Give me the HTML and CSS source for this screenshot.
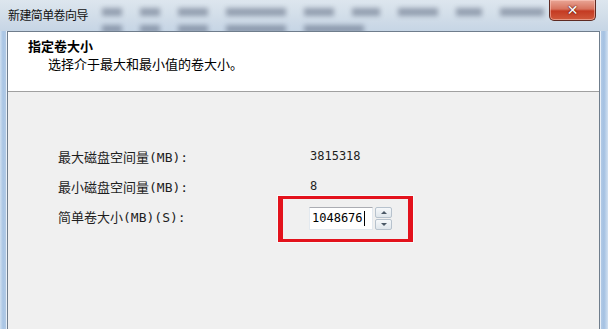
FILE: index.html
```html
<!DOCTYPE html>
<html lang="zh-CN">
<head>
    <meta charset="UTF-8">
    <meta name="viewport" content="width=device-width, initial-scale=1.0">
    <title>新建简单卷向导</title>
    <link rel="stylesheet" href="styles.css">
</head>
<body>
    <div class="window">
        <div class="titlebar">
            <span class="title">新建简单卷向导</span>
            <!-- blurred window behind the glass -->
            <div class="ghost">
                <div class="ghost-row">
                    <i class="w20"></i><i class="w20"></i><i class="w30"></i>
                    <i class="w60"></i><i class="w30"></i><i class="w28"></i><i class="w40"></i><i class="w26"></i><i class="w44"></i>
                </div>
                <div class="ghost-row">
                    <i class="w20"></i><i class="w20"></i><i class="w30"></i>
                    <i class="w60"></i><i class="w60"></i>
                </div>
            </div>
            <button class="close">✕</button>
        </div>
        <div class="client">
            <div class="header">
                <div class="h-title">指定卷大小</div>
                <div class="h-sub">选择介于最大和最小值的卷大小。</div>
            </div>
            <div class="content">
                <div class="form">
                    <div class="label">最大磁盘空间量(MB):</div>
                    <div class="value">3815318</div>
                    <div class="label">最小磁盘空间量(MB):</div>
                    <div class="value">8</div>
                    <div class="label">简单卷大小(MB)(S):</div>
                    <div class="spin">
                        <div class="spin-input">1048676<span class="caret"></span></div>
                        <div class="spin-btns">
                            <div class="spin-btn"><span class="tri up"></span></div>
                            <div class="spin-btn"><span class="tri down"></span></div>
                        </div>
                    </div>
                    <div class="mark"></div>
                </div>
            </div>
        </div>
    </div>
</body>
</html>
```

FILE: styles.css
```css
/* Page */
body {
    margin: 0;
    padding: 0;
    width: 608px;
    height: 329px;
    overflow: hidden;
    font-family: "DejaVu Sans Mono", "Noto Sans CJK SC", monospace;
    font-size: 13px;
    color: #000;
}

/* Window frame */
.window {
    height: 329px;
    display: flex;
    flex-direction: column;
    padding: 0 8px 0 7px;
    background: linear-gradient(to right, #cfdff0 0, #a9c5e4 3px, #b6cde7 7px, #b6cde7 calc(100% - 8px), #a4c1e2 calc(100% - 4px), #d2e1f1 100%);
    box-sizing: border-box;
}

.titlebar {
    height: 31px;
    margin: 0 -8px 0 -7px;
    padding-left: 8px;
    display: flex;
    align-items: flex-start;
    position: relative;
    overflow: hidden;
    background: linear-gradient(to bottom, #dde6ee, #d0dce8 60%, #c6d5e5);
}

.title {
    font-family: "Noto Sans CJK SC", sans-serif;
    font-size: 12px;
    line-height: 16px;
    margin-top: 7px;
    color: #111;
    letter-spacing: -0.6px;
    position: relative;
    z-index: 1;
}

.ghost {
    margin-left: 14px;
    display: flex;
    flex-direction: column;
    gap: 9px;
    margin-top: 8px;
    filter: blur(2.4px);
    opacity: 0.4;
}

.ghost-row {
    display: flex;
    gap: 18px;
}

.ghost-row i {
    display: block;
    height: 8px;
    background: #34405a;
}

.w20 { width: 20px; }
.w26 { width: 26px; }
.w28 { width: 28px; }
.w30 { width: 30px; }
.w40 { width: 40px; }
.w44 { width: 44px; }
.w60 { width: 60px; }

.close {
    position: absolute;
    top: 0;
    right: 12px;
    width: 47px;
    height: 21px;
    padding: 0;
    border: 1px solid #5e2a22;
    border-top: none;
    border-radius: 0 0 5px 5px;
    background: linear-gradient(to bottom, #e9a696 0, #d7735e 45%, #c43a22 55%, #d05a3c 100%);
    box-shadow: inset 0 0 0 1px rgba(255, 210, 200, 0.5);
    color: #fff;
    font-family: "DejaVu Sans", sans-serif;
    font-size: 14px;
    font-weight: bold;
    line-height: 20px;
    text-shadow: 0 0 1px #5a1208, 0 0 2px #5a1208;
}

/* Client area */
.client {
    flex: 1;
    display: flex;
    flex-direction: column;
    border: 1px solid #6f7d8c;
    border-bottom: none;
    box-shadow: 0 0 0 1px #e8eff7;
}

.header {
    height: 60px;
    background: #fff;
    border-bottom: 1px solid #a0a0a0;
    padding: 5px 0 0 20px;
    box-sizing: border-box;
    font-family: "Noto Sans CJK SC", sans-serif;
    font-size: 13px;
    line-height: 17px;
}

.h-title {
    font-weight: bold;
}

.h-sub {
    padding-left: 20px;
    margin-top: 1px;
}

.content {
    flex: 1;
    background: #f0f0f0;
    padding: 49px 0 0 50px;
}

.form {
    display: grid;
    grid-template-columns: 252px auto;
    grid-auto-rows: 30px;
    align-items: center;
    position: relative;
    width: 360px;
}

.label {
    font-size: 13px;
    color: #1e1e1e;
}

.value {
    font-size: 12px;
    color: #1e1e1e;
}

/* Spin box */
.spin {
    display: flex;
    align-items: center;
    gap: 2px;
    margin-top: 5px;
    margin-left: -1px;
}

.spin-input {
    width: 64px;
    height: 23px;
    box-sizing: border-box;
    background: #fff;
    border: 1px solid #e3e9ef;
    border-top-color: #abadb3;
    padding-left: 2px;
    font-size: 12px;
    line-height: 21px;
    display: flex;
    align-items: center;
}

.caret {
    display: inline-block;
    width: 1px;
    height: 15px;
    background: #000;
    margin-left: 1px;
}

.spin-btns {
    display: flex;
    flex-direction: column;
    gap: 1px;
}

.spin-btn {
    width: 17px;
    height: 11px;
    box-sizing: border-box;
    border: 1px solid #b7c2cd;
    border-radius: 2px;
    background: linear-gradient(to bottom, #f6f8fa, #dfe6ec);
    display: flex;
    align-items: center;
    justify-content: center;
}

.tri {
    width: 0;
    height: 0;
    border-left: 3px solid transparent;
    border-right: 3px solid transparent;
}

.tri.up {
    border-bottom: 3px solid #4a5866;
}

.tri.down {
    border-top: 3px solid #4a5866;
}

/* Red annotation frame */
.mark {
    position: absolute;
    left: 220px;
    top: 55px;
    width: 135px;
    height: 46px;
    box-sizing: border-box;
    border: 3px solid #e3121c;
    border-left-width: 5px;
    border-right-width: 5px;
    box-shadow: 0 0 0 1px rgba(255, 255, 255, 0.6);
}
```
